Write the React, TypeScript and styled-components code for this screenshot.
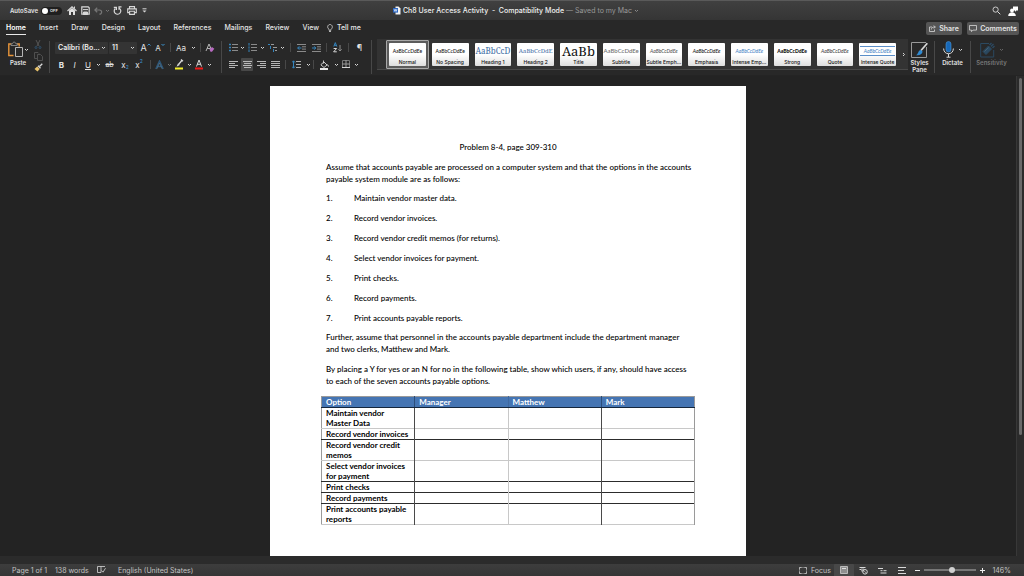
import React from "react";
import styled, { createGlobalStyle } from "styled-components";

const UI = `Inter, "Liberation Sans", sans-serif`;
const DOC = `Lato, "Liberation Sans", sans-serif`;

const GlobalStyle = createGlobalStyle`
  * { box-sizing: border-box; }
  body { margin: 0; background: #232323; font-family: ${UI}; color: #e4e4e4; }
  button { font: inherit; color: inherit; background: none; border: 0; padding: 0; margin: 0; }
  svg { display: block; flex: none; }
`;

const Window = styled.div`
  display: flex;
  flex-direction: column;
  height: 100vh;
  overflow: hidden;
`;

/* ---------- title bar ---------- */

const TitleBar = styled.header`
  display: grid;
  grid-template-columns: 1fr auto 1fr;
  align-items: center;
  height: 20px;
  flex: none;
  padding: 0 2px 0 10px;
  border-top: 1px solid #5a5a5a;
  background: linear-gradient(#404040, #353535);
  font-size: 7px;
`;

const QuickAccess = styled.div`
  display: flex;
  align-items: center;
`;

const AutoSave = styled.label`
  display: flex;
  align-items: center;
  gap: 3px;
  width: 56px;
  font-size: 6px;
  font-weight: 600;
  white-space: nowrap;
`;

const Switch = styled.button`
  display: flex;
  align-items: center;
  gap: 2px;
  width: 21px;
  height: 8px;
  padding: 0 1px;
  border-radius: 4px;
  background: #1f1f1f;
  font-size: 4px;
  font-weight: 600;
  &::before {
    content: "";
    width: 6px;
    height: 6px;
    border-radius: 50%;
    background: #fff;
  }
`;

const Slot = styled.button<{ $w: number; $active?: boolean; $size?: number }>`
  display: flex;
  align-items: center;
  align-self: center;
  justify-content: center;
  flex: none;
  width: ${(p) => p.$w}px;
  height: 13px;
  border-radius: 1px;
  font-size: ${(p) => p.$size ?? 8}px;
  line-height: 12px;
  background: ${(p) => (p.$active ? "#484848" : "none")};
`;

const DocTitle = styled.div`
  display: flex;
  align-items: center;
  gap: 2px;
  font-weight: 500;
  white-space: pre;
  color: #f0f0f0;
`;

const Saved = styled.span`
  font-weight: 400;
  color: #989898;
`;

const TitleEnd = styled.div`
  display: flex;
  justify-content: flex-end;
`;

/* ---------- tabs ---------- */

const TabBar = styled.nav`
  display: flex;
  align-items: flex-start;
  gap: 13px;
  height: 19px;
  flex: none;
  padding: 0 5px 0 6px;
  background: #282828;
  font-size: 7px;
  font-weight: 500;
`;

const Tab = styled.button<{ $active?: boolean }>`
  display: flex;
  align-items: center;
  height: 15px;
  padding-top: 1px;
  white-space: nowrap;
  font-weight: ${(p) => (p.$active ? 600 : 500)};
  color: ${(p) => (p.$active ? "#fff" : "#e6e6e6")};
  border-bottom: 1px solid ${(p) => (p.$active ? "#e8e8e8" : "transparent")};
`;

const TellMe = styled(Tab)`
  gap: 4px;
  margin-left: -5px;
`;

const TabActions = styled.div`
  display: flex;
  gap: 5px;
  margin: 2px 0 0 auto;
`;

const ActionButton = styled.button<{ $w: number }>`
  display: flex;
  align-items: center;
  justify-content: center;
  gap: 3px;
  width: ${(p) => p.$w}px;
  height: 13px;
  border-radius: 2px;
  background: #555;
  font-weight: 600;
`;

/* ---------- ribbon ---------- */

const Ribbon = styled.div`
  display: flex;
  height: 37px;
  flex: none;
  background: #282828;
  border-bottom: 1px solid #242424;
`;

const Clipboard = styled.div`
  display: flex;
  width: 49px;
  flex: none;
  padding: 1px 0 0 7px;
`;

const PasteButton = styled.button`
  display: flex;
  flex-direction: column;
  align-items: center;
  width: 22px;
  height: 28px;
  font-size: 6px;
  font-weight: 600;
  line-height: 8px;
`;

const PasteIcon = styled.span`
  display: flex;
  align-items: center;
  gap: 1px;
  height: 19px;
`;

const ClipTools = styled.div`
  display: flex;
  flex-direction: column;
  justify-content: space-between;
  width: 18px;
  height: 32px;
  align-items: center;
`;

const Divider = styled.span<{ $h: number }>`
  flex: none;
  align-self: center;
  width: 1px;
  height: ${(p) => p.$h}px;
  background: #484848;
`;

const RibbonGroup = styled.div<{ $w: number }>`
  display: flex;
  flex-direction: column;
  gap: 4px;
  flex: none;
  width: ${(p) => p.$w}px;
  padding: 2px 0 0 5px;
`;

const ToolRow = styled.div`
  display: flex;
  align-items: center;
  height: 13px;
`;

const PickerShell = styled.label<{ $w: number }>`
  display: flex;
  align-items: center;
  justify-content: space-between;
  flex: none;
  width: ${(p) => p.$w}px;
  height: 12px;
  margin-right: 1px;
  padding: 0 2px 0 3px;
  border-radius: 1px;
  background: #343434;
`;

const Picker = styled.select`
  appearance: none;
  flex: 1;
  min-width: 0;
  border: 0;
  padding: 0;
  background: none;
  color: #ececec;
  font: 600 7px ${UI};
`;

const Gallery = styled.div`
  display: flex;
  align-items: stretch;
  flex: 1;
  min-width: 0;
  height: 31px;
  margin-left: 5px;
  padding-left: 9px;
  background: #333;
  border-bottom: 1px solid #484848;
`;

const StyleGrid = styled.div`
  display: grid;
  grid-template-columns: repeat(12, minmax(0, 1fr));
  flex: 1;
  min-width: 0;
  align-items: center;
`;

const StyleCell = styled.button<{ $selected?: boolean }>`
  height: 29px;
  padding: 2px;
  border: 1px solid ${(p) => (p.$selected ? "#a8a8a8" : "transparent")};
  border-radius: 1px;
  background: ${(p) => (p.$selected ? "#5c5c5c" : "none")};
`;

const StyleCard = styled.span`
  display: flex;
  flex-direction: column;
  height: 23px;
  overflow: hidden;
  border-radius: 1px;
  background: linear-gradient(#fff 50%, #dedede);
  color: #111;
`;

const Sample = styled.span<{
  $color?: string; $size?: number; $serif?: boolean; $italic?: boolean; $bold?: boolean; $lined?: boolean;
}>`
  display: flex;
  align-items: center;
  justify-content: center;
  height: ${(p) => (p.$lined ? 10 : 16)}px;
  margin: ${(p) => (p.$lined ? "3px 1px" : "0")};
  flex: none;
  white-space: nowrap;
  border: 0 solid #5b8fc9;
  border-width: ${(p) => (p.$lined ? "1px 0" : "0")};
  color: ${(p) => p.$color ?? "#111"};
  font-family: ${(p) => (p.$serif ? `"Noto Serif", "DejaVu Serif", "Liberation Serif", serif` : DOC)};
  font-size: ${(p) => p.$size ?? 5}px;
  font-style: ${(p) => (p.$italic ? "italic" : "normal")};
  font-weight: ${(p) => (p.$bold ? 900 : p.$serif ? 400 : 500)};
`;

const StyleName = styled.span`
  font-size: 5px;
  font-weight: 500;
  line-height: 7px;
  text-align: center;
  white-space: nowrap;
`;

const BigTool = styled.button<{ $w: number; $dim?: boolean }>`
  display: flex;
  flex-direction: column;
  align-items: center;
  flex: none;
  width: ${(p) => p.$w}px;
  padding-top: 1px;
  font-size: 6px;
  font-weight: 600;
  line-height: 7px;
  color: ${(p) => (p.$dim ? "#777" : "#e4e4e4")};
`;

const BigIcon = styled.span`
  display: flex;
  align-items: center;
  gap: 4px;
  height: 19px;
`;

/* ---------- document ---------- */

const Workspace = styled.main`
  display: flex;
  flex: 1;
  min-height: 0;
  background: #232323;
`;

const Canvas = styled.div`
  flex: 1;
  overflow: hidden;
  padding-top: 10px;
`;

const ScrollTrack = styled.div`
  width: 8px;
  padding: 2px;
  background: #2b2b2b;
  border-left: 1px solid #383838;
`;

const ScrollThumb = styled.div`
  height: 75%;
  border-radius: 2px;
  background: #6a6a6a;
`;

const Page = styled.article`
  max-width: 476px;
  min-height: 616px;
  margin: 0 auto;
  padding: 55px 56px;
  background: #fff;
  color: #000;
  font: 500 8px/12px ${DOC};
`;

const Heading = styled.h1`
  margin: 0 0 8px;
  font: inherit;
  text-align: center;
`;

const Paragraph = styled.p`
  margin: 0 -2px 7px 0;
  & + & { margin-top: 8px; }
`;

const Steps = styled.ol`
  display: flex;
  flex-direction: column;
  gap: 8px;
  margin: 7px 0;
  padding: 0;
  list-style: none;
  counter-reset: step;
`;

const Step = styled.li`
  display: flex;
  counter-increment: step;
  &::before { content: counter(step) "."; width: 28px; }
`;

const AccessTable = styled.table`
  width: calc(100% + 10px);
  margin: 9px -5px 0;
  table-layout: fixed;
  border-collapse: collapse;
  font-weight: 700;
  line-height: 10px;
  border: 1px solid #9a9a9a;
  th, td {
    height: 11px;
    padding: 0 4px;
    text-align: left;
    vertical-align: top;
    font-weight: 700;
    border-right: 1px solid #4a4a4a;
  }
  th:nth-child(2), td:nth-child(2) { border-right-color: #c8c8c8; }
  th:last-child, td:last-child { border-right-color: #9a9a9a; }
  thead th { background: #4575b3; color: #fff; border-bottom: 1px solid #14263c; border-right-color: #2b4d7a; }
  thead th:nth-child(2) { border-right-color: #4069a0; }
`;

const Row = styled.tr<{ $faint: boolean }>`
  border-bottom: 1px solid ${(p) => (p.$faint ? "#c8c8c8" : "#2c2c2c")};
`;

/* ---------- status bar ---------- */

const StatusWrap = styled.div`
  flex: none;
  background: #2b2b2b;
`;

const StatusBar = styled.footer`
  display: flex;
  align-items: center;
  height: 12px;
  margin-top: 8px;
  padding: 0 13px 0 12px;
  background: linear-gradient(#3d3d3d, #353535);
  font-size: 7px;
  color: #c4c4c4;
  white-space: nowrap;
`;

const StatusItem = styled.button<{ $w: number }>`
  display: flex;
  align-items: center;
  gap: 4px;
  flex: none;
  width: ${(p) => p.$w}px;
`;

const StatusEnd = styled.div`
  display: flex;
  align-items: center;
  margin-left: auto;
`;

const Zoom = styled.input`
  appearance: none;
  width: 52px;
  height: 2px;
  margin: 0;
  background: #777;
  &::-webkit-slider-thumb {
    appearance: none;
    width: 6px;
    height: 6px;
    border-radius: 50%;
    background: #d0d0d0;
  }
`;

const ZoomValue = styled.output`
  width: 22px;
  text-align: right;
`;

/* ---------- icons ---------- */

type SvgProps = { w: number; h: number; children: React.ReactNode; c?: string; sw?: number };
const Svg = ({ w, h, children, c = "#d8d8d8", sw = 1 }: SvgProps) => (
  <svg width={w} height={h} viewBox={`0 0 ${w} ${h}`} fill="none" stroke={c} strokeWidth={sw} aria-hidden="true">
    {children}
  </svg>
);

const Chevron = ({ c = "#d8d8d8" }: { c?: string }) => (
  <Svg w={5} h={4} c={c}><path d="M1 1l1.5 1.5L4 1" /></Svg>
);

const BLUE = "#3585bd";

const SizeMark = ({ up }: { up?: boolean }) => (
  <Svg w={4} h={9} c="#3f92cd"><path d={up ? "M.5 2.5L2 1l1.5 1.5" : "M.5 1L2 2.500 3.500 1"} /></Svg>
);

const ListIcon = ({ kind }: { kind: "bullet" | "number" | "multi" }) => (
  <Svg w={9} h={9}>
    {kind === "multi" ? (
      <>
        <path d="M3 1.5h3M5 4.5h4M7 7.5h2" stroke="#9a9a9a" />
        <path d="M0 1.5h2M2.5 3v3M5.5 6v3" stroke={BLUE} />
      </>
    ) : (
      <>
        <path d="M3 1.5h6M3 4.5h6M3 7.5h6" stroke="#8a8a8a" />
        {kind === "bullet"
          ? <path d="M0 1.5h2M0 4.5h2M0 7.5h2" stroke={BLUE} strokeWidth={1.6} />
          : <path d="M1 0v2.6M1 3.4v2.2M1 6.4V9" stroke={BLUE} />}
      </>
    )}
  </Svg>
);

const AlignIcon = ({ rows }: { rows: [number, number][] }) => (
  <Svg w={9} h={9} c="#c6c6c6">
    {rows.map(([a, b], i) => <path key={i} d={`M${a} ${i * 2 + 1.5}H${b}`} strokeWidth={0.9} />)}
  </Svg>
);

const IndentIcon = ({ out }: { out?: boolean }) => (
  <Svg w={9} h={8}>
    <path d="M0 .5h9M5 2.8h4M5 5.1h4M0 7.5h9" stroke="#8a8a8a" />
    <path d={out ? "M4.5 4H.7M2.3 2.3L.7 4l1.6 1.7" : "M0 4h3.8M2.2 2.3L3.8 4 2.2 5.7"} stroke={BLUE} />
  </Svg>
);

const HomeIcon = () => (
  <Svg w={10} h={9}>
    <path d="M.5 5L5 .9 9.5 5" strokeWidth={1.2} />
    <path d="M2 4.6L5 2l3 2.6V9H6V6H4v3H2z" fill="#e0e0e0" stroke="none" />
    <path d="M7.5 .5v2" />
  </Svg>
);
const SaveIcon = () => (
  <Svg w={9} h={9}>
    <path d="M.8.8h6.4l1 1v6.4H.8z" strokeWidth={1.2} />
    <path d="M2 3.6h5M2.5 6h4v2.5h-4z" fill="#d8d8d8" />
  </Svg>
);
const UndoIcon = () => (
  <Svg w={9} h={8} c="#777"><path d="M3.2.8L.9 3l2.3 2.2M1 3h4.4c3 0 3 4.2 0 4.2" strokeWidth={1.2} /></Svg>
);
const RedoIcon = () => (
  <Svg w={9} h={9}>
    <path d="M2.300 2.500a3.300 3.300 0 1 0 4 -.300M.800 1.300h2.600v2.600M8.500.800H6v3" strokeWidth={1.2} />
  </Svg>
);
const PrintIcon = () => (
  <Svg w={10} h={9}>
    <path d="M2.5 2.6V.6h5v2M2.4 6.6H.7V2.9h8.6v3.7H7.6" strokeWidth={1.1} />
    <path d="M2.6 5.2h4.8v3.2H2.6z" strokeWidth={1.1} />
  </Svg>
);
const WordIcon = () => (
  <Svg w={8} h={9}>
    <path d="M2.5 .5h3l2 2v6h-5z" fill="#f2f2f2" stroke="none" />
    <path d="M0 2h5v4.6H0z" fill="#2b66c2" stroke="none" />
    <path d="M1.1 3l.7 2.4.7-2 .7 2L3.9 3" stroke="#fff" strokeWidth={0.6} />
  </Svg>
);
const SearchIcon = () => (
  <Svg w={9} h={9}><circle cx="3.6" cy="3.6" r="2.6" strokeWidth={0.9} /><path d="M5.5 5.5l2.8 2.8" /></Svg>
);
const PersonIcon = () => (
  <Svg w={10} h={10}>
    <path d="M5 .5h5v4H8.2L7 6V4.500H5z" fill="#fff" stroke="none" />
    <circle cx="4" cy="4.400" r="1.900" fill="#fff" stroke="none" />
    <path d="M.2 10c0-5 7.600-5 7.600 0z" fill="#fff" stroke="none" />
  </Svg>
);
const BulbIcon = () => (
  <Svg w={6} h={8} sw={0.8}><path d="M2 5.300C-.4 3.500.8.500 3 .500s3.400 3 1 4.800v1H2zM2 7.500h2" /></Svg>
);
const ShareIcon = () => (
  <Svg w={7} h={7} sw={0.8}><path d="M3 2H.500v4.500h5V4.500M2.300 4.500C2.500 2.800 3.600 2 5 2h1.300M4.800.500L6.300 2 4.800 3.500" /></Svg>
);
const CommentIcon = () => (
  <Svg w={8} h={7} sw={0.8}><path d="M.500.500h7v4.600H4L2.500 6.600V5.100h-2z" /></Svg>
);
const PasteGlyph = () => (
  <Svg w={15} h={17}>
    <path d="M5.500 14.500H.800V3h2.400M9 3h2.200v2.500" stroke="#e8953a" strokeWidth={1.400} />
    <path d="M3 4.500V2.800h1.500C4.500.600 7.800.600 7.800 2.800H9.300v1.700z" stroke="#8c8c8c" strokeWidth={0.900} />
    <path d="M7.500 6.500h7v9h-7z" fill="#2a2a2a" stroke="#b5b5b5" />
  </Svg>
);
const CutIcon = () => (
  <Svg w={8} h={9} c="#555"><path d="M2 0l3 6M6 0L3 6" /><path d="M1 7.500a1 1 0 1 0 2 0 1 1 0 1 0-2 0M5 7.500a1 1 0 1 0 2 0 1 1 0 1 0-2 0" stroke="#31506b" /></Svg>
);
const CopyIcon = () => (
  <Svg w={9} h={9} c="#505050"><path d="M.500.500h3.500l1 1M.500.500v6H3M3.500 2.500h3l2 2v4h-5z" /></Svg>
);
const BrushIcon = () => (
  <Svg w={9} h={9}>
    <path d="M8.300.700L5.500 3.500" strokeWidth={1.300} />
    <path d="M4 2.700l2.500 2.500" strokeWidth={1.300} />
    <path d="M3.200 3.600L5.700 6 3.500 8.600.500 6z" fill="#e9c36b" stroke="none" />
  </Svg>
);
const ClearIcon = () => (
  <Svg w={10} h={9}><path d="M1 8l3-7 2.500 6M2.200 5.500h3" strokeWidth={0.900} stroke="#c4c4c4" /><path d="M4.500 6.500L7 4l2.300 1.700L7 8.700H5.500z" fill="#b96bc2" stroke="none" /></Svg>
);
const ColorIcon = ({ kind }: { kind: "pen" | "font" }) => (
  <Svg w={10} h={11}>
    {kind === "pen"
      ? <><path d="M8.300 1L4.500 5.500M7 .500l2 1.700" strokeWidth={1.300} /><path d="M4 4.500l1.800 1.600L2.500 7.800z" fill="#d8d8d8" stroke="none" /></>
      : <path d="M2.500 7.500L5 1l2.500 6.500M3.300 5.300h3.400" />}
    <path d="M1 9.500h8" stroke={kind === "pen" ? "#f4f02a" : "#f01818"} strokeWidth={2} />
  </Svg>
);
const EffectA = () => (
  <Svg w={9} h={10} c="#2c5678"><path d="M.800 9L4.500 1 8.200 9M2.500 6.500h4" strokeWidth={1.500} /><path d="M1.800 9L4.500 3l2.700 6" stroke="#6d8698" strokeWidth={0.500} /></Svg>
);
const SpacingIcon = () => (
  <Svg w={9} h={9}><path d="M4 1.500h5M4 4.500h5M4 7.500h5" stroke="#b0b0b0" /><path d="M1.500 1v7M0 2.500L1.500.800 3 2.500M0 6.500l1.500 1.700L3 6.500" stroke={BLUE} /></Svg>
);
const BucketIcon = () => (
  <Svg w={10} h={10}><path d="M4.500.500v3M2 4.500L5 2l3 3-3 2.500L2 5z" strokeWidth={0.900} /><path d="M8.500 4.500l1 2" /><path d="M1 9h8" stroke="#e8e8e8" strokeWidth={2} /></Svg>
);
const BordersIcon = () => (
  <Svg w={9} h={9}><path d="M.500.500h7v7h-7z" stroke="#777" /><path d="M4 0v8M0 4h8" stroke="#999" /><path d="M0 7.500h8" /></Svg>
);
const SortIcon = () => (
  <Svg w={9} h={11}>
    <path d="M.800 4.500L2.300.600l1.500 3.900M1.300 3.300h2" stroke={BLUE} />
    <path d="M.600 6.500h3L.600 9.800h3.200" />
    <path d="M7 3v6M5.300 7.300L7 9l1.700-1.700" stroke="#999" strokeWidth={0.900} />
  </Svg>
);
const StylesPaneIcon = () => (
  <Svg w={17} h={16}>
    <path d="M15.500 5v10.500H.500V.500H15" stroke="#999" />
    <path d="M16.300 1.300L10 8.500" strokeWidth={1.700} />
    <path d="M9.800 8l1.800 1.600c-.500 3.200-3.500 4.200-6.600 3.600 2.400-.800 2-4.800 4.800-5.200z" fill="#2f8ad2" stroke="none" />
  </Svg>
);
const MicIcon = () => (
  <Svg w={11} h={17}>
    <rect x="3" y=".5" width="5" height="10.500" rx="2.500" fill="#1768b8" stroke="#4a93d4" strokeWidth={0.600} />
    <path d="M.600 7.500c0 7 9.800 7 9.800 0M5.500 12.800V16M3.500 16.200h4" />
  </Svg>
);
const SensitivityIcon = () => (
  <Svg w={15} h={16} c="#2b4960">
    <path d="M9 1.500H.700v13.500h13V8" />
    <path d="M3 9.500l5.500-5.500 3 3L6 12.500z" fill="#2b4960" /><path d="M9.500 3l2-2M12.500 6l2-2M11 4.500l2.500-2.500" strokeWidth={1.400} />
    <path d="M4.500 9.500l4-4" stroke="#4b6678" strokeWidth={0.800} />
  </Svg>
);
const ProofIcon = () => (
  <Svg w={9} h={8} sw={0.800}><path d="M4 6.500H.500v-6H4v6M4 .500h4M4.500 4.500L6 6.200 8.500 2.200" /></Svg>
);
const FocusIcon = () => (
  <Svg w={8} h={7}><path d="M.500 2.500V.500h2M5.500.500h2v2M7.500 4.500v2h-2M2.500 6.500h-2v-2" /><path d="M.500.500h7v6h-7z" stroke="#999" strokeWidth={0.600} /></Svg>
);
const PrintViewIcon = () => (
  <Svg w={8} h={8}><path d="M.500.500h7v7h-7z" fill="#8f8f8f" stroke="#bbb" /><path d="M2 2.500h4" stroke="#ddd" /></Svg>
);
const WebViewIcon = () => (
  <Svg w={9} h={9}><path d="M.500 1.500h6M.500 3.500h3" /><path d="M2 2.500h3v3H2z" fill="#999" stroke="none" /><circle cx="6" cy="5.800" r="2.300" /><path d="M4.500 4.300l3 3" strokeWidth={0.700} /></Svg>
);
const OutlineIcon = () => (
  <Svg w={9} h={7}><path d="M0 1.500h5M2.500 3.700h2M5.500 3.700h3M2.500 6h6" /></Svg>
);
const DraftIcon = () => (
  <Svg w={8} h={7}><path d="M0 .5h8M0 3.500h6M0 6.500h8" /></Svg>
);

/* ---------- data ---------- */

const TABS = ["Home", "Insert", "Draw", "Design", "Layout", "References", "Mailings", "Review", "View"];

type StyleEntry = { name: string; text?: string; color?: string; size?: number; serif?: boolean; italic?: boolean; bold?: boolean; lined?: boolean };
const STYLES: StyleEntry[] = [
  { name: "Normal" },
  { name: "No Spacing" },
  { name: "Heading 1", text: "AaBbCcD", color: "#3a6aa3", size: 8, serif: true },
  { name: "Heading 2", text: "AaBbCcDdE", color: "#3a6aa3", size: 6, serif: true },
  { name: "Title", text: "AaBb", size: 13, serif: true },
  { name: "Subtitle", color: "#6f6f6f", size: 6 },
  { name: "Subtle Emph...", color: "#555", italic: true },
  { name: "Emphasis", italic: true },
  { name: "Intense Emp...", color: "#4a86c6", italic: true },
  { name: "Strong", bold: true },
  { name: "Quote", color: "#444", italic: true },
  { name: "Intense Quote", color: "#4a86c6", italic: true, lined: true },
];

const STEPS = [
  "Maintain vendor master data.",
  "Record vendor invoices.",
  "Record vendor credit memos (for returns).",
  "Select vendor invoices for payment.",
  "Print checks.",
  "Record payments.",
  "Print accounts payable reports.",
];

const COLUMNS = ["Option", "Manager", "Matthew", "Mark"];
const OPTIONS = [
  { label: "Maintain vendor Master Data", faint: true },
  { label: "Record vendor invoices", faint: false },
  { label: "Record vendor credit memos", faint: true },
  { label: "Select vendor invoices for payment", faint: false },
  { label: "Print checks", faint: false },
  { label: "Record payments", faint: false },
  { label: "Print accounts payable reports", faint: true },
];

const Script = styled.span<{ $at: string }>`
  align-self: ${(p) => p.$at};
  color: #3f92cd;
  font-size: 5px;
  line-height: 7px;
`;

export default function App() {
  return (
    <Window>
      <GlobalStyle />
      <TitleBar>
        <QuickAccess>
          <AutoSave htmlFor="autosave">AutoSave<Switch id="autosave" role="switch" aria-checked={false}>OFF</Switch></AutoSave>
          <Slot $w={12} aria-label="Home"><HomeIcon /></Slot>
          <Slot $w={14} aria-label="Save"><SaveIcon /></Slot>
          <Slot $w={13} aria-label="Undo"><UndoIcon /></Slot>
          <Slot $w={5} aria-label="Undo options"><Chevron c="#777" /></Slot>
          <Slot $w={15} aria-label="Redo"><RedoIcon /></Slot>
          <Slot $w={13} aria-label="Print"><PrintIcon /></Slot>
          <Slot $w={13} aria-label="Customize toolbar"><Svg w={5} h={5}><path d="M.5 .8h4" /><path d="M.5 2.500h4L2.500 4.500z" fill="#d8d8d8" stroke="none" /></Svg></Slot>
        </QuickAccess>
        <DocTitle>
          <WordIcon />
          <span>Ch8 User Access Activity  -  Compatibility Mode<Saved> — Saved to my Mac</Saved></span>
          <Chevron c="#8a8a8a" />
        </DocTitle>
        <TitleEnd>
          <Slot $w={16} aria-label="Search"><SearchIcon /></Slot>
          <Slot $w={18} aria-label="Account"><PersonIcon /></Slot>
        </TitleEnd>
      </TitleBar>

      <TabBar>
        {TABS.map((t) => <Tab key={t} $active={t === "Home"}>{t}</Tab>)}
        <TellMe><BulbIcon />Tell me</TellMe>
        <TabActions>
          <ActionButton $w={36}><ShareIcon />Share</ActionButton>
          <ActionButton $w={52}><CommentIcon />Comments</ActionButton>
        </TabActions>
      </TabBar>

      <Ribbon>
        <Clipboard>
          <PasteButton>
            <PasteIcon><PasteGlyph /><Chevron /></PasteIcon>
            Paste
          </PasteButton>
          <ClipTools>
            <CutIcon /><CopyIcon /><BrushIcon />
          </ClipTools>
        </Clipboard>
        <Divider $h={32} />
        <RibbonGroup $w={171}>
          <ToolRow>
            <PickerShell $w={53}>
              <Picker aria-label="Font" defaultValue="c"><option value="c">Calibri (Bo...</option></Picker><Chevron />
            </PickerShell>
            <PickerShell $w={28}>
              <Picker aria-label="Font size" defaultValue="11"><option>11</option></Picker><Chevron />
            </PickerShell>
            <Slot $w={15} $size={9} aria-label="Grow font">A<SizeMark up /></Slot>
            <Slot $w={14} aria-label="Shrink font">A<SizeMark /></Slot>
            <Slot $w={3} as="span" /><Divider $h={9} />
            <Slot $w={20} aria-label="Change case">Aa</Slot>
            <Slot $w={4} aria-label="Case options"><Chevron /></Slot>
            <Slot $w={5} as="span" /><Divider $h={9} />
            <Slot $w={18} aria-label="Clear formatting"><ClearIcon /></Slot>
          </ToolRow>
          <ToolRow>
            <Slot $w={13} aria-label="Bold"><b>B</b></Slot>
            <Slot $w={13} aria-label="Italic"><i>I</i></Slot>
            <Slot $w={14} aria-label="Underline"><u>U</u></Slot>
            <Slot $w={6} aria-label="Underline options"><Chevron /></Slot>
            <Slot $w={17} $size={7} aria-label="Strikethrough"><s>ab</s></Slot>
            <Slot $w={14} aria-label="Subscript">x<Script $at="flex-end">2</Script></Slot>
            <Slot $w={14} aria-label="Superscript">x<Script $at="flex-start">2</Script></Slot>
            <Slot $w={4} as="span" /><Divider $h={9} />
            <Slot $w={16} aria-label="Text effects"><EffectA /></Slot>
            <Slot $w={4} aria-label="Effect options"><Chevron c="#777" /></Slot>
            <Slot $w={16} aria-label="Highlight"><ColorIcon kind="pen" /></Slot>
            <Slot $w={4} aria-label="Highlight options"><Chevron /></Slot>
            <Slot $w={16} aria-label="Font colour"><ColorIcon kind="font" /></Slot>
            <Slot $w={4} aria-label="Colour options"><Chevron /></Slot>
          </ToolRow>
        </RibbonGroup>
        <Divider $h={32} />
        <RibbonGroup $w={149}>
          <ToolRow>
            <Slot $w={12} aria-label="Bullets"><ListIcon kind="bullet" /></Slot>
            <Slot $w={7} aria-label="Bullet options"><Chevron /></Slot>
            <Slot $w={13} aria-label="Numbering"><ListIcon kind="number" /></Slot>
            <Slot $w={7} aria-label="Numbering options"><Chevron /></Slot>
            <Slot $w={13} aria-label="Multilevel list"><ListIcon kind="multi" /></Slot>
            <Slot $w={7} aria-label="Multilevel options"><Chevron /></Slot>
            <Slot $w={4} as="span" /><Divider $h={9} />
            <Slot $w={20} aria-label="Decrease indent"><IndentIcon out /></Slot>
            <Slot $w={10} aria-label="Increase indent"><IndentIcon /></Slot>
            <Slot $w={5} as="span" /><Divider $h={9} />
            <Slot $w={21} aria-label="Sort"><SortIcon /></Slot>
            <Divider $h={9} />
            <Slot $w={21} $size={9} aria-label="Show marks">¶</Slot>
          </ToolRow>
          <ToolRow>
            <Slot $w={12} aria-label="Align left"><AlignIcon rows={[[0, 9], [0, 6], [0, 9], [0, 6]]} /></Slot>
            <Slot $w={2} as="span" />
            <Slot $w={12} $active aria-label="Centre"><AlignIcon rows={[[0, 9], [1, 8], [0, 9], [1, 8]]} /></Slot>
            <Slot $w={16} aria-label="Align right"><AlignIcon rows={[[0, 9], [3, 9], [0, 9], [3, 9]]} /></Slot>
            <Slot $w={12} aria-label="Justify"><AlignIcon rows={[[0, 9], [0, 9], [0, 9], [0, 9]]} /></Slot>
            <Slot $w={4} as="span" /><Divider $h={9} />
            <Slot $w={20} aria-label="Line spacing"><SpacingIcon /></Slot>
            <Slot $w={4} aria-label="Spacing options"><Chevron /></Slot>
            <Slot $w={3} as="span" /><Divider $h={9} />
            <Slot $w={20} aria-label="Shading"><BucketIcon /></Slot>
            <Slot $w={4} aria-label="Shading options"><Chevron /></Slot>
            <Slot $w={16} aria-label="Borders"><BordersIcon /></Slot>
            <Slot $w={4} aria-label="Border options"><Chevron /></Slot>
          </ToolRow>
        </RibbonGroup>
        <Divider $h={34} />
        <Gallery>
          <StyleGrid>
            {STYLES.map((s, i) => (
              <StyleCell key={s.name} $selected={i === 0}>
                <StyleCard>
                  <Sample $color={s.color} $size={s.size} $serif={s.serif} $italic={s.italic} $bold={s.bold} $lined={s.lined}>
                    {s.text ?? "AaBbCcDdEe"}
                  </Sample>
                  <StyleName>{s.name}</StyleName>
                </StyleCard>
              </StyleCell>
            ))}
          </StyleGrid>
          <Slot $w={9} aria-label="More styles"><Svg w={4} h={5}><path d="M1 1l1.500 1.500L1 4" /></Svg></Slot>
        </Gallery>
        <BigTool $w={23}><BigIcon><StylesPaneIcon /></BigIcon>Styles<br />Pane</BigTool>
        <BigTool as="span" $w={3} />
        <Divider $h={32} />
        <BigTool $w={35}><BigIcon><MicIcon /><Chevron /></BigIcon>Dictate</BigTool>
        <Divider $h={32} />
        <BigTool $w={41} $dim><BigIcon><SensitivityIcon /><Chevron c="#666" /></BigIcon>Sensitivity</BigTool>
        <BigTool as="span" $w={12} />
      </Ribbon>

      <Workspace>
        <Canvas>
          <Page>
            <Heading>Problem 8-4, page 309-310</Heading>
            <Paragraph>
              Assume that accounts payable are processed on a computer system and that the options in the accounts payable system module are as follows:
            </Paragraph>
            <Steps>{STEPS.map((s) => <Step key={s}>{s}</Step>)}</Steps>
            <Paragraph>
              Further, assume that personnel in the accounts payable department include the department manager and two clerks, Matthew and Mark.
            </Paragraph>
            <Paragraph>
              By placing a Y for yes or an N for no in the following table, show which users, if any, should have access to each of the seven accounts payable options.
            </Paragraph>
            <AccessTable>
              <thead><tr>{COLUMNS.map((c) => <th key={c} scope="col">{c}</th>)}</tr></thead>
              <tbody>
                {OPTIONS.map((o) => <Row key={o.label} $faint={o.faint}><th scope="row">{o.label}</th><td /><td /><td /></Row>)}
              </tbody>
            </AccessTable>
          </Page>
        </Canvas>
        <ScrollTrack><ScrollThumb /></ScrollTrack>
      </Workspace>

      <StatusWrap>
        <StatusBar>
          <StatusItem $w={43}>Page 1 of 1</StatusItem>
          <StatusItem $w={42}>138 words</StatusItem>
          <StatusItem $w={21} aria-label="Proofing"><ProofIcon /></StatusItem>
          <StatusItem $w={80}>English (United States)</StatusItem>
          <StatusEnd>
            <StatusItem $w={35}><FocusIcon />Focus</StatusItem>
            <Slot $w={20} $active aria-label="Print layout"><PrintViewIcon /></Slot>
            <Slot $w={19} aria-label="Web layout"><WebViewIcon /></Slot>
            <Slot $w={19} aria-label="Outline"><OutlineIcon /></Slot>
            <Slot $w={19} aria-label="Draft"><DraftIcon /></Slot>
            <Slot $w={13} aria-label="Zoom out"><Svg w={5} h={5} c="#eee"><path d="M0 2.500h5" /></Svg></Slot>
            <Zoom type="range" aria-label="Zoom" min={10} max={280} defaultValue={157} />
            <Slot $w={13} aria-label="Zoom in"><Svg w={5} h={5} c="#eee"><path d="M0 2.500h5M2.500 0v5" /></Svg></Slot>
            <ZoomValue>146%</ZoomValue>
          </StatusEnd>
        </StatusBar>
      </StatusWrap>
    </Window>
  );
}
